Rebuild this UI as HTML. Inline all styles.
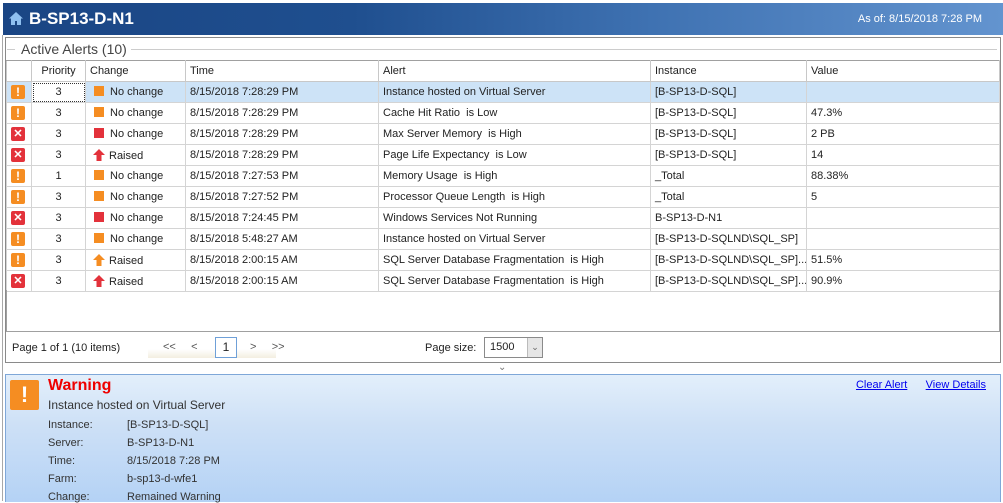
<!DOCTYPE html>
<html><head><style>
body{margin:0;width:1003px;height:501px;overflow:hidden;background:#fff;font-family:"Liberation Sans",sans-serif;font-size:11px;color:#222;position:relative}
.a{position:absolute}
#hdr{left:3px;top:3px;width:1000px;height:32px;background:linear-gradient(90deg,#1a4584 0%,#1f4f8f 35%,#3f72b2 65%,#6394cf 100%)}
#outer{left:2px;top:35px;width:1000px;height:466px;border-left:1px solid #a8a8a8}
#panel{left:5px;top:37px;width:994px;height:324px;border:1px solid #8a8a8a}
table{border-collapse:collapse;position:absolute;left:6px;top:60px;width:993px;table-layout:fixed}
td{height:20px;border:1px solid #d4d4d4;padding:0 4px;white-space:nowrap;overflow:hidden;font-size:11px}
tr.h td{border-color:#c8c8c8;border-top:1px solid #a0a0a0}
.c{text-align:center}
.ic{width:14px;height:14px;border-radius:2px;display:inline-block;color:#fff;font-weight:bold;text-align:center;line-height:14px;font-size:12px;vertical-align:middle}
.w{background:#f58d22}.e{background:#e3323b;font-size:11px}
.sq{display:inline-block;width:10px;height:10px;vertical-align:-1px;margin:0 6px 0 4px}
.ar{display:inline-block;width:12px;vertical-align:-2px;margin:0 4px 0 3px}
tr.sel td{background:#cde3f7}
#detail{left:5px;top:374px;width:994px;height:127px;border:1px solid #7fa7d8;border-bottom:none;background:linear-gradient(180deg,#e3effb 0%,#cde0f6 40%,#b4d2f5 100%)}
.lbl{position:absolute;left:48px;font-size:11px;color:#333}
.val{position:absolute;left:127px;font-size:11px;color:#333}
a{color:#0000ee;text-decoration:underline}
</style></head><body>
<div class="a" id="outer"></div>
<div class="a" id="hdr">
<svg class="a" style="left:6px;top:9px" width="14" height="13" viewBox="0 0 14 13"><path d="M7 0L0 6.5h2V13h4V9h2v4h4V6.5h2z" fill="#8fc0f0"/></svg>
<div class="a" style="left:26px;top:6px;color:#fff;font-weight:bold;font-size:17px">B-SP13-D-N1</div>
<div class="a" style="right:21px;top:10px;color:#fff;font-size:11px">As of: 8/15/2018 7:28 PM</div>
</div>
<div class="a" id="panel"></div>
<div class="a" style="left:7px;top:49px;width:8px;border-top:1px solid #ccc"></div>
<div class="a" style="left:131px;top:49px;width:866px;border-top:1px solid #ccc"></div>
<div class="a" style="left:21px;top:41px;font-size:14px;color:#444">Active Alerts (10)</div>
<table>
<colgroup><col style="width:25px"><col style="width:54px"><col style="width:100px"><col style="width:193px"><col style="width:272px"><col style="width:156px"><col style="width:193px"></colgroup>
<tr class="h"><td></td><td class="c">Priority</td><td>Change</td><td>Time</td><td>Alert</td><td>Instance</td><td>Value</td></tr>
<tr class="sel"><td><span class="ic w">!</span></td><td class="c" style="outline:1px dotted #333;outline-offset:-2px;background:#fff">3</td><td><span class="sq" style="background:#f58d22"></span>No change</td><td>8/15/2018 7:28:29 PM</td><td>Instance hosted on Virtual Server</td><td>[B-SP13-D-SQL]</td><td></td></tr>
<tr><td><span class="ic w">!</span></td><td class="c">3</td><td><span class="sq" style="background:#f58d22"></span>No change</td><td>8/15/2018 7:28:29 PM</td><td>Cache Hit Ratio&nbsp; is Low</td><td>[B-SP13-D-SQL]</td><td>47.3%</td></tr>
<tr><td><span class="ic e">✕</span></td><td class="c">3</td><td><span class="sq" style="background:#e3323b"></span>No change</td><td>8/15/2018 7:28:29 PM</td><td>Max Server Memory&nbsp; is High</td><td>[B-SP13-D-SQL]</td><td>2 PB</td></tr>
<tr><td><span class="ic e">✕</span></td><td class="c">3</td><td><svg class="ar" width="12" height="12" viewBox="0 0 12 12"><path d="M6 0L12 6H8.5V12h-5V6H0z" fill="#e3323b"/></svg>Raised</td><td>8/15/2018 7:28:29 PM</td><td>Page Life Expectancy&nbsp; is Low</td><td>[B-SP13-D-SQL]</td><td>14</td></tr>
<tr><td><span class="ic w">!</span></td><td class="c">1</td><td><span class="sq" style="background:#f58d22"></span>No change</td><td>8/15/2018 7:27:53 PM</td><td>Memory Usage&nbsp; is High</td><td>_Total</td><td>88.38%</td></tr>
<tr><td><span class="ic w">!</span></td><td class="c">3</td><td><span class="sq" style="background:#f58d22"></span>No change</td><td>8/15/2018 7:27:52 PM</td><td>Processor Queue Length&nbsp; is High</td><td>_Total</td><td>5</td></tr>
<tr><td><span class="ic e">✕</span></td><td class="c">3</td><td><span class="sq" style="background:#e3323b"></span>No change</td><td>8/15/2018 7:24:45 PM</td><td>Windows Services Not Running</td><td>B-SP13-D-N1</td><td></td></tr>
<tr><td><span class="ic w">!</span></td><td class="c">3</td><td><span class="sq" style="background:#f58d22"></span>No change</td><td>8/15/2018 5:48:27 AM</td><td>Instance hosted on Virtual Server</td><td>[B-SP13-D-SQLND\SQL_SP]</td><td></td></tr>
<tr><td><span class="ic w">!</span></td><td class="c">3</td><td><svg class="ar" width="12" height="12" viewBox="0 0 12 12"><path d="M6 0L12 6H8.5V12h-5V6H0z" fill="#f58d22"/></svg>Raised</td><td>8/15/2018 2:00:15 AM</td><td>SQL Server Database Fragmentation&nbsp; is High</td><td>[B-SP13-D-SQLND\SQL_SP]...</td><td>51.5%</td></tr>
<tr><td><span class="ic e">✕</span></td><td class="c">3</td><td><svg class="ar" width="12" height="12" viewBox="0 0 12 12"><path d="M6 0L12 6H8.5V12h-5V6H0z" fill="#e3323b"/></svg>Raised</td><td>8/15/2018 2:00:15 AM</td><td>SQL Server Database Fragmentation&nbsp; is High</td><td>[B-SP13-D-SQLND\SQL_SP]...</td><td>90.9%</td></tr>
</table>
<div class="a" style="left:6px;top:290px;width:992px;height:41px;border:1px solid #a0a0a0;border-top:none"></div>
<div class="a" style="left:12px;top:342px">Page 1 of 1 (10 items)</div>
<div class="a" style="left:148px;top:336px;width:128px;height:22px;background:linear-gradient(180deg,#fff 60%,#f3eee0)"></div>
<div class="a" style="left:163px;top:341px;color:#555">&lt;&lt;&nbsp;&nbsp;&nbsp;&nbsp;&nbsp;&lt;</div>
<div class="a" style="left:215px;top:337px;width:20px;height:19px;border:1px solid #6fa0d8;background:#fff;text-align:center;line-height:19px;font-size:12px">1</div>
<div class="a" style="left:250px;top:341px;color:#555">&gt;&nbsp;&nbsp;&nbsp;&nbsp;&nbsp;&gt;&gt;</div>
<div class="a" style="left:425px;top:342px">Page size:</div>
<div class="a" style="left:484px;top:337px;width:57px;height:19px;border:1px solid #8a8a8a;background:#fff"><span style="position:absolute;left:5px;top:3px">1500</span><div style="position:absolute;right:0;top:0;width:14px;height:19px;background:#e6e6e6;border-left:1px solid #bbb;text-align:center;color:#666;font-size:9px;line-height:19px">⌄</div></div>
<div class="a" style="left:498px;top:362px;color:#777;font-size:10px">⌄</div>
<div class="a" id="detail">
<div class="a" style="left:4px;top:5px;width:29px;height:30px;background:#f58d22;border-radius:2px;color:#fff;font-weight:bold;font-size:22px;text-align:center;line-height:30px">!</div>
<div class="a" style="left:42px;top:2px;color:#ee0000;font-weight:bold;font-size:16px">Warning</div>
<div class="a" style="left:42px;top:23px;font-size:12px;color:#333">Instance hosted on Virtual Server</div>
<div class="a" style="right:14px;top:4px"><a>Clear Alert</a>&nbsp;&nbsp;&nbsp;&nbsp;&nbsp;&nbsp;<a>View Details</a></div>
</div>
<div class="lbl" style="top:419px">Instance:</div><div class="val" style="top:419px">[B-SP13-D-SQL]</div>
<div class="lbl" style="top:437px">Server:</div><div class="val" style="top:437px">B-SP13-D-N1</div>
<div class="lbl" style="top:455px">Time:</div><div class="val" style="top:455px">8/15/2018 7:28 PM</div>
<div class="lbl" style="top:473px">Farm:</div><div class="val" style="top:473px">b-sp13-d-wfe1</div>
<div class="lbl" style="top:491px">Change:</div><div class="val" style="top:491px">Remained Warning</div>
</body></html>
